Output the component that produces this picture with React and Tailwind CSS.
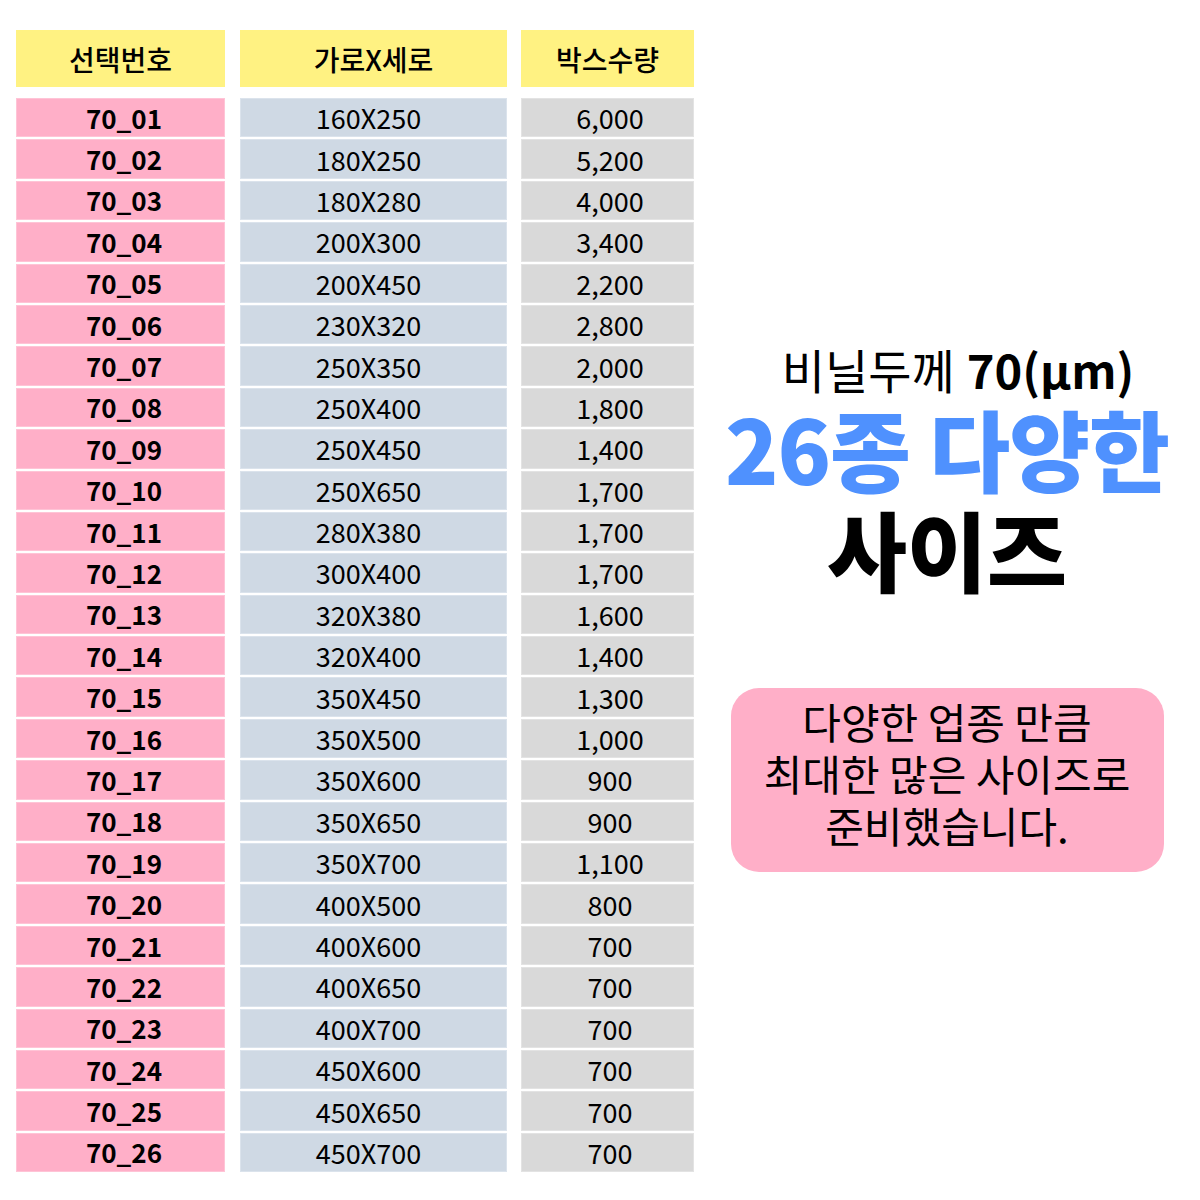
const rows = [
  ["70_01", "160X250", "6,000"],
  ["70_02", "180X250", "5,200"],
  ["70_03", "180X280", "4,000"],
  ["70_04", "200X300", "3,400"],
  ["70_05", "200X450", "2,200"],
  ["70_06", "230X320", "2,800"],
  ["70_07", "250X350", "2,000"],
  ["70_08", "250X400", "1,800"],
  ["70_09", "250X450", "1,400"],
  ["70_10", "250X650", "1,700"],
  ["70_11", "280X380", "1,700"],
  ["70_12", "300X400", "1,700"],
  ["70_13", "320X380", "1,600"],
  ["70_14", "320X400", "1,400"],
  ["70_15", "350X450", "1,300"],
  ["70_16", "350X500", "1,000"],
  ["70_17", "350X600", "900"],
  ["70_18", "350X650", "900"],
  ["70_19", "350X700", "1,100"],
  ["70_20", "400X500", "800"],
  ["70_21", "400X600", "700"],
  ["70_22", "400X650", "700"],
  ["70_23", "400X700", "700"],
  ["70_24", "450X600", "700"],
  ["70_25", "450X650", "700"],
  ["70_26", "450X700", "700"],
];

const font = { fontFamily: "'Noto Sans CJK KR', 'Noto Sans', sans-serif" };

function Column({ title, width, bg, border, bold, col, shift }) {
  return (
    <div className="flex shrink-0 flex-col" style={{ width }}>
      <div className="flex h-[57px] items-center justify-center bg-[#fff282] text-[28px] font-medium text-black">
        {title}
      </div>
      <div className="mt-[11px] flex flex-col gap-[2px]">
        {rows.map((r) => (
          <div
            key={r[0]}
            className={`flex h-[39.4px] items-center justify-center border leading-none text-black ${bg} ${border} ${shift} ${bold ? "text-[26px] font-bold" : "text-[27px] font-normal"}`}
          >
            {r[col]}
          </div>
        ))}
      </div>
    </div>
  );
}

export default function App() {
  return (
    <div className="flex h-[1200px] w-[1200px] bg-white pt-[30px]" style={font}>
      <div className="ml-[16px] flex shrink-0 gap-[14px]">
        <Column title="선택번호" width="209px" bg="bg-[#ffafc8]" border="border-[#ffc4d6]" shift="pl-[7px]" bold col={0} />
        <div className="ml-[1px] flex">
          <Column title="가로X세로" width="267px" bg="bg-[#cfd9e4]" border="border-[#dbe3ec]" shift="pr-[10px]" col={1} />
        </div>
        <Column title="박스수량" width="173px" bg="bg-[#d9d9d9]" border="border-[#e3e3e3]" shift="pl-[5px]" col={2} />
      </div>

      <div className="flex flex-1 flex-col items-center">
        <div className="mt-[309px] flex items-baseline pl-[22px] text-[47px] leading-[60px] text-black">
          <span className="font-normal">비닐두께</span>
          <span className="ml-[12px] font-bold">70(μm)</span>
        </div>
        <div className="mt-[-2px] text-[88px] font-black leading-[100px] tracking-[-1px] text-[#4f91fe]">
          26종 다양한
        </div>
        <div className="mt-[1px] text-[87px] font-black leading-[100px] text-black">사이즈</div>

        <div className="mt-[90px] flex w-[433px] flex-col items-center rounded-[28px] bg-[#ffafc8] pt-[7px] pb-[21px] text-center text-[42px] leading-[52px] text-black">
          <span>다양한 업종 만큼</span>
          <span>최대한 많은 사이즈로</span>
          <span>준비했습니다.</span>
        </div>
      </div>
    </div>
  );
}
